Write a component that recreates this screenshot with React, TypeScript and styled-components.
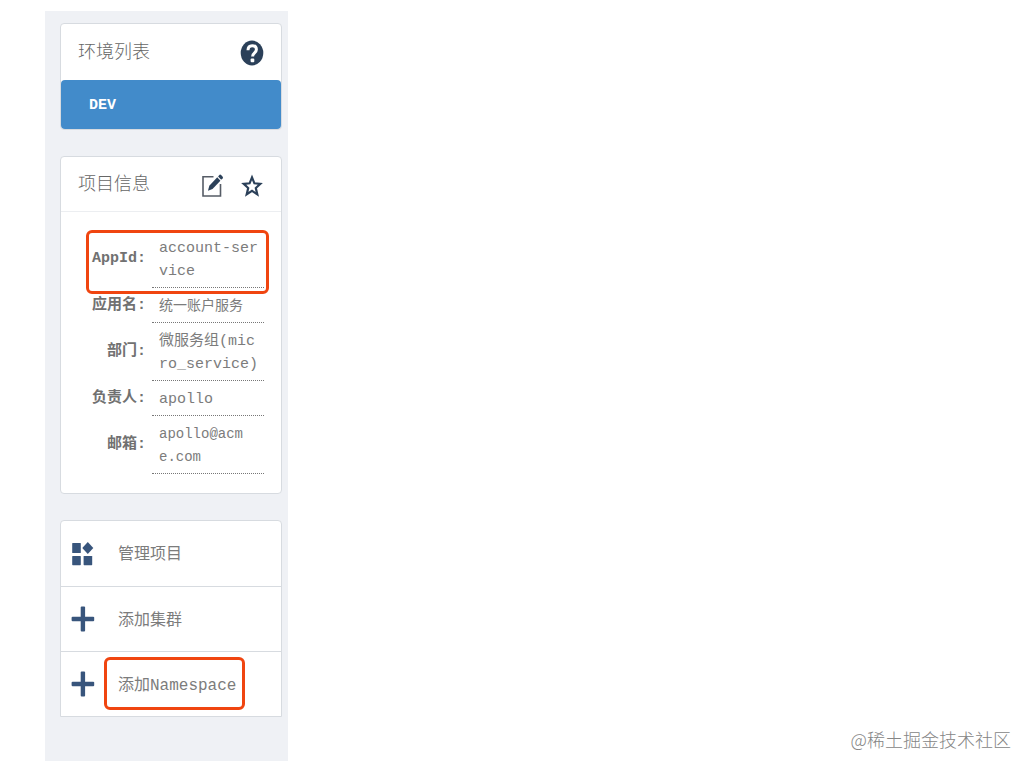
import React from 'react';
import styled, { createGlobalStyle } from 'styled-components';

const Global = createGlobalStyle`
  * { box-sizing: border-box; }
  body {
    margin: 0;
    background: #fff;
    color: #7c7c7c;
    font-family: 'Liberation Mono', 'Noto Sans CJK SC', monospace;
    font-size: 15px;
    line-height: 23px;
  }
`;

const Page = styled.div`
  display: flex;
  min-height: 100vh;
  padding: 11px 22px 11px 45px;
`;

const Sidebar = styled.aside`
  display: flex;
  flex-direction: column;
  gap: 26px;
  flex: 0 0 243px;
  padding: 12px 6px 44px 15px;
  background: #eff1f5;
`;

const Main = styled.main`
  display: flex;
  flex: 1;
  align-items: flex-end;
  justify-content: flex-end;
`;

const Watermark = styled.span`
  padding-bottom: 10px;
  color: #858585;
  font-family: 'Noto Sans CJK SC', sans-serif;
  font-size: 18px;
  font-weight: 300;
  line-height: 24px;
`;

const Card = styled.section<{ $square?: boolean }>`
  border: 1px solid #d7dbe0;
  border-radius: ${(p) => (p.$square ? '4px 4px 0 0' : '4px')};
  background: #fff;
`;

const CardHeader = styled.header<{ $divided?: boolean }>`
  display: flex;
  align-items: center;
  gap: 16px;
  height: ${(p) => (p.$divided ? 55 : 56)}px;
  padding: 0 17px;
  border-bottom: ${(p) => (p.$divided ? '1px solid #eceef1' : '0')};
`;

const Title = styled.h2`
  flex: 1;
  margin: 0;
  padding-bottom: 5px;
  color: #666;
  font-family: 'Noto Sans CJK SC', sans-serif;
  font-size: 18px;
  font-weight: 300;
  line-height: 26px;
`;

const IconButton = styled.button`
  display: flex;
  padding: 1px 0 0;
  border: 0;
  background: none;
  color: #2b4059;
  cursor: pointer;
`;

const EnvButton = styled.button`
  display: block;
  width: 100%;
  height: 49px;
  padding: 2px 28px 0;
  border: 0;
  border-radius: 4px;
  background: #428bca;
  color: #fff;
  font: inherit;
  font-weight: 700;
  text-align: left;
  cursor: pointer;
`;

const InfoBody = styled.div`
  position: relative;
  padding: 18px 17px 19px 25px;
`;

const InfoTable = styled.table`
  width: 100%;
  border-collapse: separate;
  border-spacing: 0;
  table-layout: fixed;
`;

const Label = styled.th`
  width: 66px;
  padding: 0 6px 1px 0;
  color: #717171;
  font-weight: 700;
  text-align: right;
  vertical-align: middle;
  white-space: nowrap;
`;

const Value = styled.td<{ $compact?: boolean }>`
  padding: 7px ${(p) => (p.$compact ? 16 : 4)}px 4px 7px;
  border-bottom: 1px dotted #777;
  font-size: ${(p) => (p.$compact ? 14 : 15)}px;
  word-break: break-all;
`;

const Highlight = styled.span<{ $inset: string }>`
  position: absolute;
  inset: ${(p) => p.$inset};
  border: 3px solid #f04510;
  border-radius: 6px;
  pointer-events: none;
`;

const InfoHighlight = styled(Highlight)`
  bottom: auto;
  height: 64px;
`;

const Action = styled.button`
  display: flex;
  align-items: center;
  gap: 23px;
  width: 100%;
  height: 65px;
  padding: 0 10px;
  border: 0;
  background: none;
  color: #7c7c7c;
  font: inherit;
  font-size: 16px;
  text-align: left;
  cursor: pointer;

  & + & {
    border-top: 1px solid #d7dbe0;
  }
`;

const ActionText = styled.span`
  position: relative;
  padding-top: 4px;
`;

const HelpIcon = () => (
  <svg width="24" height="26" viewBox="0 0 24 26" aria-hidden="true">
    <ellipse cx="12" cy="13" rx="11.3" ry="12.4" fill="currentColor" />
    <path d="M8 10.2C8 7.2 9.6 5.7 12.2 5.7C14.8 5.7 16.4 7.2 16.4 9.5C16.4 13 12.6 12.6 12.6 16.4" fill="none" stroke="#fff" strokeWidth="3" />
    <rect x="10.6" y="18.6" width="3.7" height="3.6" rx="1" fill="#fff" />
  </svg>
);

const EditIcon = () => (
  <svg width="24" height="26" viewBox="0 0 24 26" aria-hidden="true">
    <path d="M13.5 4.8H3V24H20.5V12" fill="none" stroke="#565c66" strokeWidth="1.6" />
    <path d="M8 18.7L9.3 13.8L17.3 5.3L20.4 8.7L12.5 17.1Z" fill="currentColor" />
    <path d="M18.1 4.4L19.6 2.8Q20.4 2.3 21.1 3L22.7 4.7Q23.3 5.5 22.7 6.2L21.2 7.8Z" fill="currentColor" />
  </svg>
);

const StarIcon = () => (
  <svg width="24" height="26" viewBox="0 0 24 26" aria-hidden="true">
    <path d="M12 5.4L14.4 11.3L20.3 11.8L15.8 16L17.3 22.4L12 18.9L6.7 22.4L8.2 16L3.7 11.8L9.6 11.3Z" fill="none" stroke="currentColor" strokeWidth="2.2" />
  </svg>
);

const ManageIcon = () => (
  <svg width="24" height="26" viewBox="0 0 24 26" fill="#38557c" aria-hidden="true">
    <rect x="1.2" y="2" width="8.6" height="10" rx=".6" />
    <path d="M16.8 1L22.3 7L16.8 13L11.3 7Z" />
    <rect x="1.2" y="15" width="8.6" height="9.2" rx=".6" />
    <rect x="12.6" y="15" width="8.6" height="9.2" rx=".6" />
  </svg>
);

const PlusIcon = () => (
  <svg width="24" height="26" viewBox="0 0 24 26" fill="#38557c" aria-hidden="true">
    <rect x="9.7" y=".4" width="4.4" height="25.2" rx="1" />
    <rect x=".6" y="10.8" width="22.6" height="4.4" rx="1" />
  </svg>
);

const details = [
  { label: 'AppId', value: 'account-service' },
  { label: '应用名', value: '统一账户服务', compact: true },
  { label: '部门', value: '微服务组(micro_service)' },
  { label: '负责人', value: 'apollo' },
  { label: '邮箱', value: 'apollo@acme.com', compact: true },
];

export default function App() {
  return (
    <>
      <Global />
      <Page>
        <Sidebar>
          <Card>
            <CardHeader>
              <Title>环境列表</Title>
              <IconButton aria-label="帮助"><HelpIcon /></IconButton>
            </CardHeader>
            <EnvButton>DEV</EnvButton>
          </Card>

          <Card>
            <CardHeader $divided>
              <Title>项目信息</Title>
              <IconButton aria-label="编辑"><EditIcon /></IconButton>
              <IconButton aria-label="收藏"><StarIcon /></IconButton>
            </CardHeader>
            <InfoBody>
              <InfoTable>
                <tbody>
                  {details.map((d) => (
                    <tr key={d.label}>
                      <Label scope="row">{d.label}:</Label>
                      <Value $compact={d.compact}>{d.value}</Value>
                    </tr>
                  ))}
                </tbody>
              </InfoTable>
              <InfoHighlight $inset="18px 12px auto 25px" />
            </InfoBody>
          </Card>

          <Card $square>
            <Action><ManageIcon /><ActionText>管理项目</ActionText></Action>
            <Action><PlusIcon /><ActionText>添加集群</ActionText></Action>
            <Action>
              <PlusIcon />
              <ActionText>
                添加Namespace
                <Highlight $inset="-14px -9px -12px -14px" />
              </ActionText>
            </Action>
          </Card>
        </Sidebar>
        <Main>
          <Watermark>@稀土掘金技术社区</Watermark>
        </Main>
      </Page>
    </>
  );
}
